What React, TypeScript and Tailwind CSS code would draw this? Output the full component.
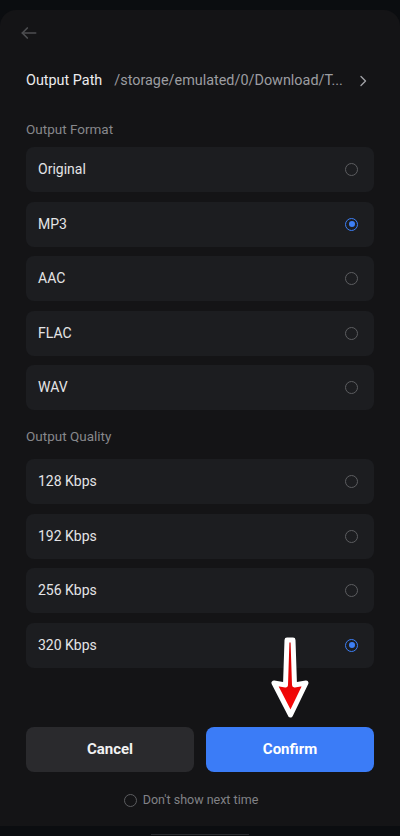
import React, { useState } from 'react';

const formats = ['Original', 'MP3', 'AAC', 'FLAC', 'WAV'];
const qualities = ['128 Kbps', '192 Kbps', '256 Kbps', '320 Kbps'];

const Radio: React.FC<{ checked: boolean }> = ({ checked }) =>
  checked ? (
    <span className="flex h-[13px] w-[13px] items-center justify-center rounded-full border-[1.5px] border-[#3d7ff5]">
      <span className="h-[6px] w-[6px] rounded-full bg-[#3d7ff5]" />
    </span>
  ) : (
    <span className="h-[13px] w-[13px] rounded-full border-[1.5px] border-[#5c5d60]" />
  );

const OptionList: React.FC<{ items: string[]; value: string; onChange: (v: string) => void }> = ({ items, value, onChange }) => (
  <div className="flex flex-col gap-[9.5px]">
    {items.map((item) => (
      <button
        key={item}
        onClick={() => onChange(item)}
        className="flex h-[45px] items-center justify-between rounded-lg bg-[#1c1d20] pl-[12px] pr-[16px] text-left text-[14px] text-[#e4e4e6]"
      >
        <span>{item}</span>
        <Radio checked={item === value} />
      </button>
    ))}
  </div>
);

const App: React.FC = () => {
  const [format, setFormat] = useState('MP3');
  const [quality, setQuality] = useState('320 Kbps');
  const [dontShow, setDontShow] = useState(false);

  return (
    <div className="relative flex h-[836px] w-[400px] flex-col bg-[#0b0d10] pt-[10px]" style={{ fontFamily: 'Roboto, "Noto Sans", sans-serif' }}>
      <div className="flex flex-1 flex-col rounded-t-2xl bg-[#141416]">
        {/* header */}
        <div className="flex h-[46px] items-center pl-[19px]">
          <svg width="20" height="20" viewBox="0 0 24 24" fill="none" stroke="#4d4e51" strokeWidth="2" strokeLinecap="round" strokeLinejoin="round">
            <path d="M20 12H4" />
            <path d="M10 6l-6 6 6 6" />
          </svg>
        </div>

        <div className="flex h-[50px] items-center px-[26px] text-[14.4px]">
          <span className="text-[#ececee]">Output Path</span>
          <span className="ml-[12px] flex-1 truncate text-[#9c9da1]">/storage/emulated/0/Download/T...</span>
          <svg className="ml-2 mr-[6px]" width="10" height="12" viewBox="0 0 10 12" fill="none" stroke="#a0a1a5" strokeWidth="1.4" strokeLinecap="round" strokeLinejoin="round">
            <path d="M3 1.5l4.5 4.5L3 10.5" />
          </svg>
        </div>

        <div className="px-[26px]">
          <div className="mt-[13px] mb-[8px] h-[20px] text-[13.5px] leading-[20px] text-[#87888c]">Output Format</div>
          <OptionList items={formats} value={format} onChange={setFormat} />

          <div className="mt-[16px] mb-[13px] h-[20px] text-[13.5px] leading-[20px] text-[#87888c]">Output Quality</div>
          <OptionList items={qualities} value={quality} onChange={setQuality} />

          <div className="mt-[59px] flex gap-[12px]">
            <button className="h-[45px] flex-1 rounded-lg bg-[#2a2a2d] text-[15px] font-bold text-[#f2f2f2]">Cancel</button>
            <button className="h-[45px] flex-1 rounded-lg bg-[#3b7cf7] text-[15px] font-bold text-white">Confirm</button>
          </div>

          <div className="mt-[19px] flex justify-center pr-[18px]">
            <button onClick={() => setDontShow(!dontShow)} className="flex h-[20px] items-center gap-[6px] text-[12.5px] text-[#818286]">
              <span className="h-[13px] w-[13px] rounded-full border-[1.5px] border-[#5c5d60]" />
              <span>Don't show next time</span>
            </button>
          </div>
        </div>
      </div>
      <div className="flex h-[10px] items-end justify-center">
        <div className="mb-[1px] h-[1px] w-[98px] bg-[#2a2c30]" />
      </div>

      {/* annotation arrow */}
      <svg className="pointer-events-none absolute left-0 top-0" width="400" height="836">
        <defs>
          <linearGradient id="ar" x1="0" y1="0" x2="0" y2="1">
            <stop offset="0" stopColor="#c80000" />
            <stop offset="1" stopColor="#ff0a0a" />
          </linearGradient>
        </defs>
        <polygon
          points="287,640 293,640 294.5,685 306,683 290.5,715 274,683 285.5,685"
          fill="url(#ar)"
          stroke="#ffffff"
          strokeWidth="5"
          strokeLinejoin="round"
        />
      </svg>
    </div>
  );
};

export default App;
